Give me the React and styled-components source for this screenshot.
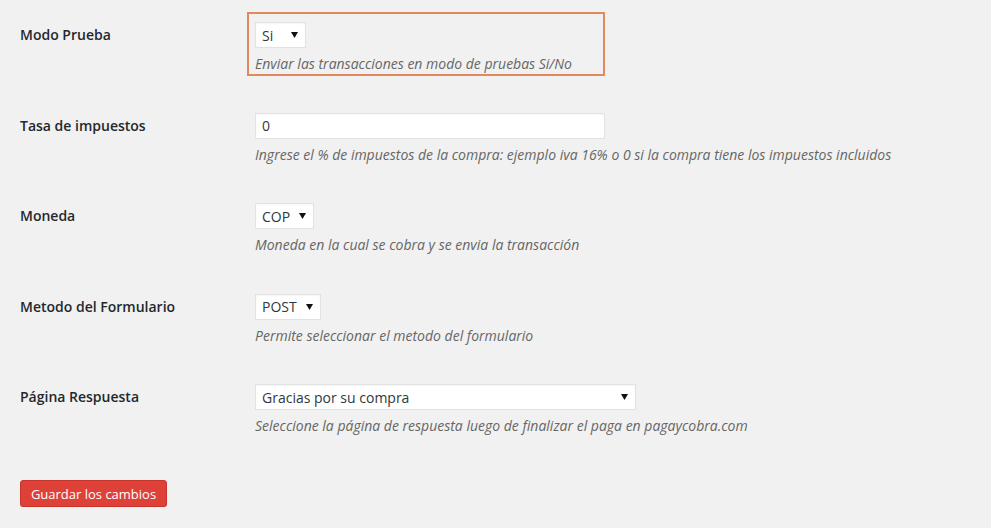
import React from "react";
import styled, { createGlobalStyle } from "styled-components";

const Global = createGlobalStyle`
  html, body { margin: 0; padding: 0; background: #f1f1f1; }
  body { font-family: "Open Sans", "Noto Sans", sans-serif; font-size: 14px; color: #444; }
`;

const Page = styled.div`
  padding: 2px 20px 0 20px;
`;

const Row = styled.div`
  display: grid;
  grid-template-columns: 235px 1fr;
  padding: 20px 0 19.5px;
`;

const Label = styled.div`
  font-weight: 600;
  color: #23282d;
  line-height: 26px;
  font-size: 14px;
`;

const Field = styled.div`
  position: relative;
  display: flex;
  flex-direction: column;
  align-items: flex-start;
`;

const Highlight = styled.div`
  position: absolute;
  left: -8px;
  top: -10px;
  width: 354px;
  height: 60px;
  border: 2px solid #e3875f;
  pointer-events: none;
`;

const SelectBox = styled.div`
  box-sizing: border-box;
  height: 26px;
  width: ${(p) => p.$w}px;
  background: #fff;
  border: 1px solid #e2e2e2;
  box-shadow: inset 0 1px 2px rgba(0, 0, 0, 0.04);
  display: flex;
  align-items: center;
  justify-content: space-between;
  padding: 0 7px 0 6px;
  color: #32373c;
  font-size: 14px;
`;

const Input = styled.div`
  box-sizing: border-box;
  height: 26px;
  width: 350px;
  background: #fff;
  border: 1px solid #e2e2e2;
  box-shadow: inset 0 1px 2px rgba(0, 0, 0, 0.04);
  display: flex;
  align-items: center;
  padding: 0 6px;
  color: #32373c;
  font-size: 14px;
`;

const Desc = styled.p`
  margin: 7px 0 0 0;
  font-style: italic;
  font-size: 14px;
  line-height: 18px;
  color: #666;
`;

const Button = styled.button`
  margin-top: 25.5px;
  height: 27px;
  width: 147px;
  background: #dd4138;
  border: 1px solid #c9352c;
  border-radius: 3px;
  color: #fff;
  font-family: "Open Sans", "Noto Sans", sans-serif;
  font-size: 13px;
  padding: 0;
  box-shadow: 0 1px 0 rgba(0, 0, 0, 0.12);
`;

const Arrow = () => (
  <svg width="7" height="6" viewBox="0 0 7 6">
    <path d="M0 0 H7 L3.5 6 Z" fill="#111" />
  </svg>
);

const Select = ({ w, children }) => (
  <SelectBox $w={w}>
    <span>{children}</span>
    <Arrow />
  </SelectBox>
);

export default function App() {
  return (
    <>
      <Global />
      <Page>
        <Row>
          <Label>Modo Prueba</Label>
          <Field>
            <Highlight />
            <Select w={51}>Si</Select>
            <Desc>Enviar las transacciones en modo de pruebas Si/No</Desc>
          </Field>
        </Row>
        <Row>
          <Label>Tasa de impuestos</Label>
          <Field>
            <Input>0</Input>
            <Desc>
              Ingrese el % de impuestos de la compra: ejemplo iva 16% o 0 si la
              compra tiene los impuestos incluidos
            </Desc>
          </Field>
        </Row>
        <Row>
          <Label>Moneda</Label>
          <Field>
            <Select w={59}>COP</Select>
            <Desc>Moneda en la cual se cobra y se envia la transacción</Desc>
          </Field>
        </Row>
        <Row>
          <Label>Metodo del Formulario</Label>
          <Field>
            <Select w={66}>POST</Select>
            <Desc>Permite seleccionar el metodo del formulario</Desc>
          </Field>
        </Row>
        <Row>
          <Label>Página Respuesta</Label>
          <Field>
            <Select w={381}>Gracias por su compra</Select>
            <Desc>
              Seleccione la página de respuesta luego de finalizar el paga en
              pagaycobra.com
            </Desc>
          </Field>
        </Row>
        <Button>Guardar los cambios</Button>
      </Page>
    </>
  );
}
